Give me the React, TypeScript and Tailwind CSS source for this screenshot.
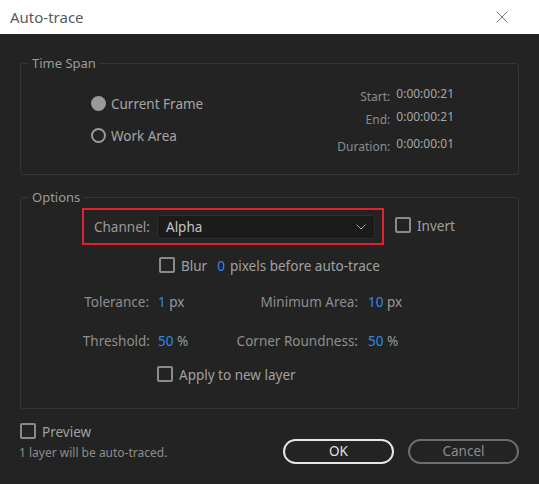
const font = { fontFamily: '"Noto Sans", "Open Sans", sans-serif' }

function Check({ label }: { label?: string }) {
    return (
        <span className="inline-flex items-center gap-[6px] whitespace-nowrap">
            <span className="w-[16px] h-[16px] border-2 border-[#8a8a8a] rounded-[2px] inline-block"></span>
            {label && <span className="translate-y-[1px]">{label}</span>}
        </span>
    )
}

function Radio({ label, on }: { label: string; on?: boolean }) {
    return (
        <div className="flex items-center gap-[5px] h-[20px]">
            {on ? (
                <span className="w-[15px] h-[15px] rounded-full bg-[#9a9a9a] inline-block"></span>
            ) : (
                <span className="w-[15px] h-[15px] rounded-full border-2 border-[#9a9a9a] inline-block"></span>
            )}
            <span className="text-[13.5px] text-[#a6a6a6] translate-y-[1px]">{label}</span>
        </div>
    )
}

function Time({ label, value }: { label: string; value: string }) {
    return (
        <div className="flex items-end h-[18px] text-[12px]">
            <span className="w-[80px] text-right text-[#8c8c8c]">{label}</span>
            <span className="ml-[6px] text-[#a6a6a6] text-[12px] -translate-y-[3px]">{value}</span>
        </div>
    )
}

export default function App() {
    return (
        <div className="w-[539px] h-[484px] bg-[#232323] flex flex-col select-none" style={font}>
            <div className="h-[34px] bg-white flex items-center justify-between pl-[10px] pr-[31px]">
                <span className="text-[15px] text-[#5a5a5a]">Auto-trace</span>
                <svg width="12" height="12" viewBox="0 0 12 12">
                    <path d="M0.5 0.5 L11.5 11.5 M11.5 0.5 L0.5 11.5" stroke="#7a7a7a" strokeWidth="1" />
                </svg>
            </div>

            <div className="px-[20px] flex flex-col">
                <fieldset className="mt-[20px] h-[121px] border border-[#363636] rounded-[3px]">
                    <legend className="ml-[8px] px-[3px] text-[13px] leading-[18px] text-[#9a9a9a]">Time Span</legend>
                    <div className="flex">
                        <div className="ml-[70px] pt-[21px] flex flex-col gap-[12px]">
                            <Radio label="Current Frame" on />
                            <Radio label="Work Area" />
                        </div>
                        <div className="ml-auto mr-[64px] pt-[16px] flex flex-col">
                            <Time label="Start:" value="0:00:00:21" />
                            <div className="h-[5px]"></div>
                            <Time label="End:" value="0:00:00:21" />
                            <div className="h-[9px]"></div>
                            <Time label="Duration:" value="0:00:00:01" />
                        </div>
                    </div>
                </fieldset>

                <fieldset className="mt-[13px] h-[221px] border border-[#363636] rounded-[3px] text-[13.5px] text-[#9a9a9a]">
                    <legend className="ml-[8px] px-[3px] text-[13px] leading-[18px] text-[#9a9a9a]">Options</legend>
                    <div className="flex items-center mt-[2px]">
                        <div className="ml-[61px] w-[302px] h-[37px] border-2 border-[#e3202b] flex items-center pl-[10px] pr-[7px]">
                            <span className="w-[63px] text-[#9a9a9a] translate-y-[1px]">Channel:</span>
                            <div className="flex-1 h-[24px] bg-[#1b1b1b] border border-[#2e2e2e] rounded-[3px] flex items-center justify-between pl-[8px] pr-[8px]">
                                <span className="text-[#c4c4c4] translate-y-[1px]">Alpha</span>
                                <svg width="10" height="6" viewBox="0 0 10 6">
                                    <path d="M0.5 0.5 L5 5 L9.5 0.5" fill="none" stroke="#a0a0a0" strokeWidth="1" />
                                </svg>
                            </div>
                        </div>
                        <div className="ml-[11px] text-[#a0a0a0]">
                            <Check label="Invert" />
                        </div>
                    </div>

                    <div className="flex items-center ml-[138px] mt-[10px] h-[20px] text-[#a0a0a0] whitespace-nowrap">
                        <Check label="Blur" />
                        <span className="ml-[10px] text-[#2d8ceb] translate-y-[1px]">0</span>
                        <span className="ml-[5px] translate-y-[1px]">pixels before auto-trace</span>
                    </div>

                    <div className="grid grid-cols-[128px_79px_130px_60px] items-center mt-[17px] h-[20px] whitespace-nowrap">
                        <span className="text-right text-[#8e8e8e]">Tolerance:</span>
                        <span className="pl-[9px]"><span className="text-[#2d8ceb]">1</span> px</span>
                        <span className="text-right text-[#8e8e8e]">Minimum Area:</span>
                        <span className="pl-[10px]"><span className="text-[#2d8ceb]">10</span> px</span>
                    </div>

                    <div className="grid grid-cols-[129px_78px_130px_60px] items-center mt-[19px] h-[20px] whitespace-nowrap">
                        <span className="text-right text-[#8e8e8e]">Threshold:</span>
                        <span className="pl-[8px]"><span className="text-[#2d8ceb]">50</span> %</span>
                        <span className="text-right text-[#8e8e8e]">Corner Roundness:</span>
                        <span className="pl-[10px]"><span className="text-[#2d8ceb]">50</span> %</span>
                    </div>

                    <div className="ml-[136px] mt-[13px] h-[20px] flex items-center text-[#a0a0a0]">
                        <Check label="Apply to new layer" />
                    </div>
                </fieldset>

                <div className="flex mt-[12px]">
                    <div className="flex flex-col">
                        <div className="h-[20px] flex items-center text-[13.5px] text-[#a0a0a0]">
                            <Check label="Preview" />
                        </div>
                        <span className="mt-[3px] -ml-[1px] text-[12px] text-[#8c8c8c]">1 layer will be auto-traced.</span>
                    </div>
                    <div className="ml-auto flex gap-[14px] mt-[18px]">
                        <button className="w-[111px] h-[25px] rounded-full border-2 border-[#e6e6e6] text-[13.5px] text-[#e0e0e0]">OK</button>
                        <button className="w-[111px] h-[25px] rounded-full border-2 border-[#6e6e6e] text-[13.5px] text-[#8c8c8c]">Cancel</button>
                    </div>
                </div>
            </div>
        </div>
    )
}
